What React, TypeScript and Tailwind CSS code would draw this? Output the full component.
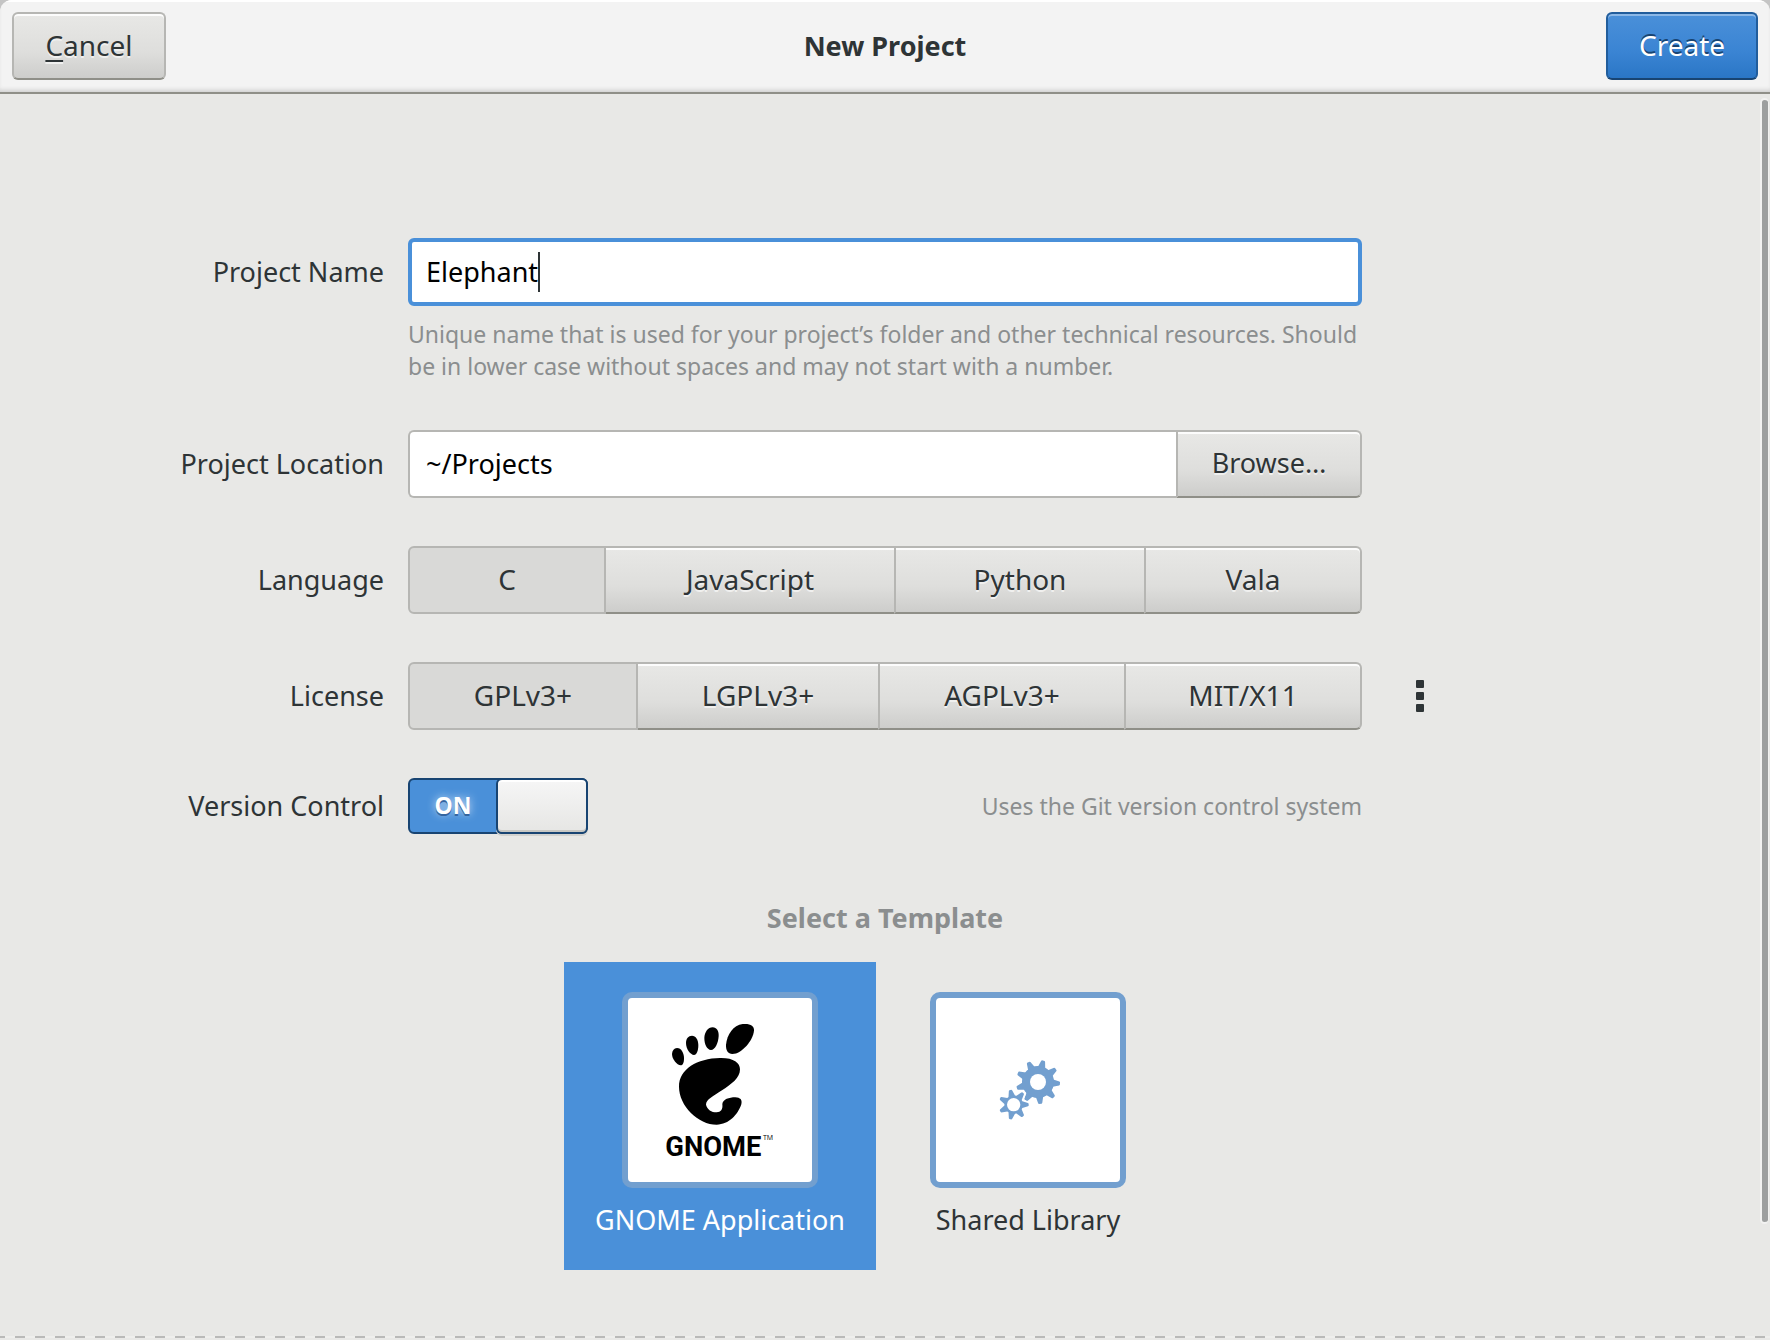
import { useState } from "react";
import type { ReactNode } from "react";

const raised =
  "border-2 border-[#b6b6b3] border-b-[#8f8f88] bg-linear-to-b from-[#e8e8e6] via-[#dededc] via-60% to-[#cdcdcb] shadow-[inset_0_2px_#fcfcfc] text-[#2e3436] [text-shadow:0_2px_#f0f0ef]";

function Row({ label, htmlFor, id, children, aside }: { label: string; htmlFor?: string; id?: string; children: ReactNode; aside?: ReactNode }) {
  return (
    <div className="grid grid-cols-[1fr_minmax(0,954px)_1fr] items-center">
      <label htmlFor={htmlFor} id={id} className="pr-6 text-right text-[27px] whitespace-nowrap">
        {label}
      </label>
      {children}
      <div className="pl-[54px]">{aside}</div>
    </div>
  );
}

function Segments({ items, columns, labelledBy }: { items: string[]; columns: string; labelledBy: string }) {
  const [active, setActive] = useState(items[0]);
  return (
    <div role="group" aria-labelledby={labelledBy} className={"grid h-[68px] " + columns}>
      {items.map((item) => (
        <button
          key={item}
          type="button"
          aria-pressed={item === active}
          onClick={() => setActive(item)}
          className={
            "-ml-0.5 pb-0.5 first:ml-0 first:rounded-l-md last:rounded-r-md " +
            (item === active ? "relative border-2 border-[#b6b6b3] bg-[#d9d9d7]" : raised)
          }
        >
          {item}
        </button>
      ))}
    </div>
  );
}

function gear(cx: number, cy: number, teeth: number, body: number, tip: number, start: number, base: number, end: number) {
  const points: string[] = [];
  for (let i = 0; i < teeth; i++) {
    const a = ((start + (i * 360) / teeth) * Math.PI) / 180;
    const at = (r: number, w: number) =>
      `${(cx + r * Math.cos(a) - w * Math.sin(a)).toFixed(1)},${(cy + r * Math.sin(a) + w * Math.cos(a)).toFixed(1)}`;
    points.push(at(body, -base), at(tip - 2, -end), at(tip, -end + 2), at(tip, end - 2), at(tip - 2, end), at(body, base));
  }
  return points.join(" ");
}

function GnomeLogo() {
  return (
    <svg viewBox="204 144 552 552" className="size-[184px]" aria-hidden="true">
      <path d="M480 324C520 323 540 338 540 358C540 384 515 402 486 421C460 438 438 449 438 464C442 479 454 487 470 487C482 486 489 479 487 462C489 448 507 442 526 442C541 443 547 449 544 463C534 493 507 524 470 524C415 524 357 468 357 410C357 357 412 325 480 324Z" />
      <path d="M548 222C571 220 583 227 582 242C579 271 546 311 517 312C504 311 497 301 498 284C501 254 520 225 548 222Z" />
      <path d="M458 232C470 233 477 243 476 258C475 279 465 300 453 300C441 299 433 283 433 264C434 246 444 232 458 232Z" />
      <path d="M396 257C407 257 415 269 415 286C415 302 410 315 402 315C391 314 378 298 378 279C378 266 385 257 396 257Z" />
      <path d="M351 294C364 294 372 309 372 325C372 338 369 346 362 346C351 345 336 328 336 312C337 301 342 295 351 294Z" />
      <text x="316" y="617" fontSize="82" fontWeight="700" className="font-['Roboto',sans-serif]">
        GNOME
      </text>
      <text x="609" y="570" fontSize="21" className="font-['Open_Sans',sans-serif]">
        TM
      </text>
    </svg>
  );
}

function GearsIcon() {
  return (
    <svg viewBox="108 84 552 552" className="size-[184px]" aria-hidden="true">
      <g fill="#729fcf">
        <polygon points={gear(414, 336, 9, 45, 66, 4, 11, 6)} />
        <circle cx="414" cy="336" r="48" />
        <circle cx="414" cy="336" r="24" fill="#fff" />
        <polygon points={gear(341, 404, 7, 26, 45, 0, 10, 5)} stroke="#fff" strokeWidth="10" />
        <polygon points={gear(341, 404, 7, 26, 45, 0, 10, 5)} />
        <circle cx="341" cy="404" r="20" fill="#fff" />
      </g>
    </svg>
  );
}

export default function App() {
  const [name, setName] = useState("Elephant");
  const [location, setLocation] = useState("~/Projects");
  const [git, setGit] = useState(true);
  const [template, setTemplate] = useState("GNOME Application");

  const templates = [
    { title: "GNOME Application", icon: <GnomeLogo /> },
    { title: "Shared Library", icon: <GearsIcon /> },
  ];

  return (
    <div className="bg-[#c4c4c4] font-['Noto_Sans','Open_Sans',sans-serif] text-[28px] leading-10 text-[#2e3436]">
      <div className="flex min-h-screen flex-col overflow-hidden rounded-t-[12px] bg-[#e8e8e6]">
        <header className="grid grid-cols-[1fr_auto_1fr] items-center border-b-2 border-[#8f8f88] bg-[#f3f3f3] p-3 shadow-[inset_0_2px_#fff,inset_0_-4px_4px_-2px_#cfcfcf]">
          <button type="button" className={"h-[68px] w-[154px] justify-self-start rounded-md pb-0.5 " + raised}>
            <span className="underline decoration-2 underline-offset-4">C</span>ancel
          </button>
          <h1 className="text-[27px] font-bold">New Project</h1>
          <button
            type="button"
            className="h-[68px] w-[152px] justify-self-end rounded-md border-2 border-[#215d9c] border-b-[#184472] bg-linear-to-b from-[#4a90d9] via-[#3a84d3] via-60% to-[#2a76c6] pb-0.5 text-white shadow-[inset_0_2px_#8cb8e7] [text-shadow:0_-2px_#184472]"
          >
            Create
          </button>
        </header>

        <div className="flex flex-1">
          <main className="flex min-w-0 flex-1 flex-col pt-36">
            <form className="-mr-[14px] flex flex-col gap-12" onSubmit={(e) => e.preventDefault()}>
              <div>
                <Row label="Project Name" htmlFor="name">
                  <div className="flex h-[68px] items-center rounded-md border-4 border-[#4a90d9] bg-white pl-[14px] text-[27px]">
                    <input
                      id="name"
                      value={name}
                      onChange={(e) => setName(e.target.value)}
                      className="field-sizing-content text-black caret-transparent outline-none"
                    />
                    <span aria-hidden="true" className="h-10 w-0.5 bg-[#2e3436]" />
                  </div>
                </Row>
                <div className="mt-3 grid grid-cols-[1fr_minmax(0,954px)_1fr]">
                  <p className="col-start-2 text-[23px] leading-8 text-[#8b8e8f]">
                    Unique name that is used for your project’s folder and other technical resources. Should be in lower case without spaces and may not
                    start with a number.
                  </p>
                </div>
              </div>

              <Row label="Project Location" htmlFor="location">
                <div className="flex h-[68px]">
                  <input
                    id="location"
                    value={location}
                    onChange={(e) => setLocation(e.target.value)}
                    className="min-w-0 flex-1 rounded-l-md border-2 border-r-0 border-[#b6b6b3] bg-white pl-4 text-[27px] text-black outline-none"
                  />
                  <button type="button" className={"w-[186px] rounded-r-md pb-0.5 text-[27px] " + raised}>
                    Browse…
                  </button>
                </div>
              </Row>

              <Row label="Language" id="language">
                <Segments
                  items={["C", "JavaScript", "Python", "Vala"]}
                  columns="grid-cols-[198fr_290fr_250fr_216fr]"
                  labelledBy="language"
                />
              </Row>

              <Row
                label="License"
                id="license"
                aside={
                  <button type="button" aria-label="More licenses" className="flex flex-col gap-1">
                    <span className="size-2 rounded-[1px] bg-[#2e3436]" />
                    <span className="size-2 rounded-[1px] bg-[#2e3436]" />
                    <span className="size-2 rounded-[1px] bg-[#2e3436]" />
                  </button>
                }
              >
                <Segments
                  items={["GPLv3+", "LGPLv3+", "AGPLv3+", "MIT/X11"]}
                  columns="grid-cols-[230fr_242fr_246fr_236fr]"
                  labelledBy="license"
                />
              </Row>

              <Row label="Version Control" id="version-control">
                <div className="flex items-center justify-between">
                  <button
                    type="button"
                    role="switch"
                    aria-checked={git}
                    aria-labelledby="version-control"
                    onClick={() => setGit(!git)}
                    className="flex h-14 w-[180px] rounded-md border-2 border-[#184472] bg-[#4a90d9]"
                  >
                    <span className="flex-1 self-center pb-0.5 text-[23px] leading-8 font-bold text-white [text-shadow:0_2px_#3465a0,0_0_8px_#cfe2f6]">
                      ON
                    </span>
                    <span className="-my-0.5 -mr-0.5 h-14 w-[92px] rounded-md border-2 border-[#184472] bg-linear-to-b from-[#f6f6f6] to-[#e6e6e4] shadow-[inset_0_2px_#fff,inset_0_-2px_#c8c8c4,0_2px_#d2d2cf]" />
                  </button>
                  <p className="text-[23px] leading-8 text-[#8b8e8f]">Uses the Git version control system</p>
                </div>
              </Row>
            </form>

            <section className="-mr-[14px] mt-16 pb-16">
              <h2 className="text-center text-[27px] font-bold text-[#8b8e8f]">Select a Template</h2>
              <div className="mt-6 grid grid-cols-[312px_304px] justify-center pr-[26px]">
                {templates.map(({ title, icon }) => (
                  <button
                    key={title}
                    type="button"
                    aria-pressed={title === template}
                    onClick={() => setTemplate(title)}
                    className={
                      "flex flex-col items-center gap-3 py-[30px] text-[27px] " + (title === template ? "bg-[#4a90d9] text-white" : "")
                    }
                  >
                    <span className="rounded-[10px] border-[6px] border-[#729fcf] bg-white text-black">{icon}</span>
                    <span>{title}</span>
                  </button>
                ))}
              </div>
            </section>
          </main>
          <div className="flex w-[14px] flex-col items-end pt-1">
            <div className="mr-px h-[1126px] w-[9px] rounded-full border-2 border-r border-[#f2f2f1] bg-[#9d9f9f]" />
          </div>
        </div>
        <div className="mb-0.5 h-0.5 bg-[repeating-linear-gradient(90deg,#b9b9b8_0_5px,#eeeeec_5px_15px,#b9b9b8_15px_20px)]" />
      </div>
    </div>
  );
}
